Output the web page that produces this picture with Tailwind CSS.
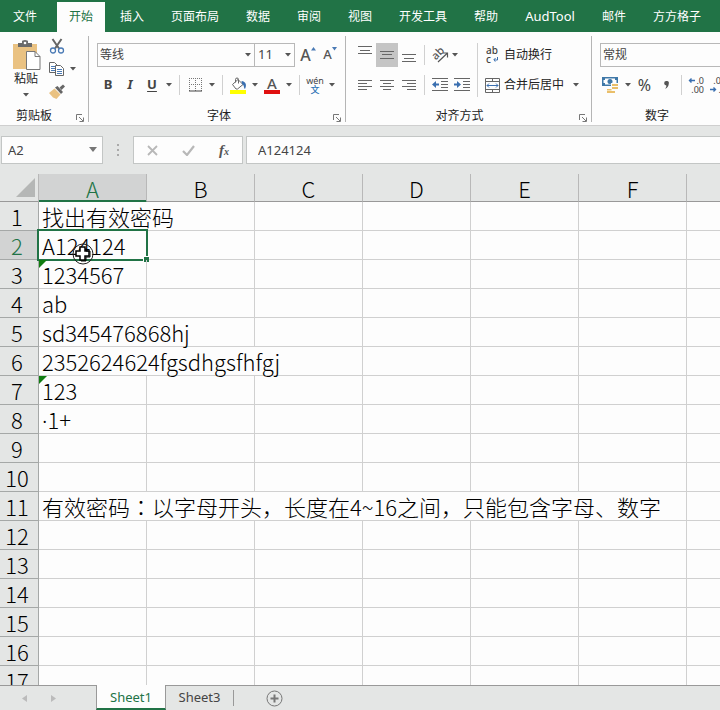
<!DOCTYPE html>
<html lang="zh-CN">
<head>
    <meta charset="UTF-8">
    <meta name="viewport" content="width=device-width, initial-scale=1.0">
    <title>Excel</title>
    <script src="https://cdn.jsdelivr.net/npm/@tailwindcss/browser@4"></script>
</head>
<body class="h-screen flex flex-col overflow-hidden bg-[#e4e6e5] text-[#333] text-xs font-['Noto_Sans','Noto_Sans_CJK_SC',sans-serif]">

    <!-- Shared icons -->
    <svg class="hidden">
        <symbol id="caret" viewBox="0 0 6 4"><path d="M0 0h6L3 3.5z" fill="#555"/></symbol>
        <symbol id="launcher" viewBox="0 0 8 8"><path d="M.5 6V.5H6M3 3l4 4M7.5 3.500V7.500H3.500" fill="none" stroke="#777"/></symbol>
    </svg>

    <!-- Ribbon tabs -->
    <nav class="flex-none h-8 pt-0.5 flex gap-[3px] bg-[#217346] text-white whitespace-nowrap overflow-hidden">
        <button class="w-[54px] flex-none pl-[13px] text-left">文件</button>
        <button class="px-3 bg-[#fdfdfd] text-[#217346]">开始</button>
        <button class="px-3">插入</button>
        <button class="px-3">页面布局</button>
        <button class="px-3">数据</button>
        <button class="px-3">审阅</button>
        <button class="px-3">视图</button>
        <button class="px-3">开发工具</button>
        <button class="px-3">帮助</button>
        <button class="px-3 text-[13px]">AudTool</button>
        <button class="px-3">邮件</button>
        <button class="px-3">方方格子</button>
    </nav>

    <!-- Ribbon -->
    <div class="flex-none flex pt-1 pb-[3px] bg-[#fdfdfd] border-b border-[#cfcfcf] overflow-hidden whitespace-nowrap text-[#222]">

        <!-- Clipboard -->
        <section class="flex-none w-[89px] h-[86px] border-r border-[#b5b5b5] flex flex-col justify-between">
            <div class="flex pl-2 pt-0.5">
                <button class="w-9 flex flex-col items-center pt-0.5" aria-label="粘贴">
                    <svg class="w-[29px] h-[31px]" viewBox="0 0 29 31">
                        <path d="M1 4h24v25H1z" fill="#eac282"/>
                        <path d="M6 3h4V1.500a3 1.500 0 0 1 6 0V3h4v4H6z" fill="#6b6b6b"/>
                        <circle cx="13" cy="3" r="1.300" fill="#fff"/>
                        <path d="M14.500 11.500h8.500l5 5v13H14.500z" fill="#fff" stroke="#777"/>
                        <path d="M23 11.500v5h5" fill="none" stroke="#777"/>
                    </svg>
                    <span class="leading-4">粘贴</span>
                    <svg class="w-1.5 h-1 mt-1.5"><use href="#caret"/></svg>
                </button>
                <div class="flex flex-col gap-[7px] pl-1">
                    <button class="w-[18px] h-4 flex justify-center" aria-label="剪切">
                        <svg class="w-4 h-4" viewBox="0 0 16 16" fill="none">
                            <path d="M3.500 1l6.500 9.500M12.500 1L6 10.500" stroke="#666" stroke-width="2"/>
                            <circle cx="4" cy="12.500" r="2.500" stroke="#4a7ab5" stroke-width="1.300"/>
                            <circle cx="12" cy="12.500" r="2.500" stroke="#4a7ab5" stroke-width="1.300"/>
                        </svg>
                    </button>
                    <button class="h-4 flex items-center gap-1" aria-label="复制">
                        <svg class="w-[18px] h-4" viewBox="0 0 18 16" stroke="#666">
                            <path d="M1.500 1.500h5l3 3v7h-8z" fill="#fff"/>
                            <path d="M3 5.500h4M3 7.500h4M3 9.500h4" stroke="#4a7ab5"/>
                            <path d="M7.500 4.500h5l3 3v7h-8z" fill="#fff"/>
                            <path d="M9 8.500h5M9 10.500h5M9 12.500h5" stroke="#4a7ab5"/>
                        </svg>
                        <svg class="w-1.5 h-1"><use href="#caret"/></svg>
                    </button>
                    <button class="w-[18px] h-4 flex justify-center" aria-label="格式刷">
                        <svg class="w-4 h-4" viewBox="0 0 16 16">
                            <path d="M6 3.500l2.500-1.500 5.500 6-2 2z" fill="#666"/>
                            <path d="M10.500 3.500L14 .5l2 2-3.500 3.500z" fill="#666"/>
                            <path d="M5.500 4.500l6 6L7.500 15 4 13.500 0 9z" fill="#eac282"/>
                        </svg>
                    </button>
                </div>
            </div>
            <div class="flex items-center justify-between pl-4 pr-1 leading-3"><span>剪贴板</span><svg class="w-2 h-2 mt-1"><use href="#launcher"/></svg></div>
        </section>

        <!-- Font -->
        <section class="flex-none w-[257px] h-[86px] pt-[7px] border-r border-[#b5b5b5] flex flex-col justify-between">
            <div class="pl-2 flex flex-col gap-1.5">
                <div class="flex h-6 items-center">
                    <div class="relative w-[158px]">
                        <select aria-label="字体" class="appearance-none w-full h-6 pl-0.5 border border-[#b8b8b8] text-[#444]"><option>等线</option></select>
                        <svg class="absolute right-1 top-2.5 w-1.5 h-1"><use href="#caret"/></svg>
                    </div>
                    <div class="relative w-[41px] -ml-px">
                        <select aria-label="字号" class="appearance-none w-full h-6 pl-[3px] border border-[#b8b8b8] text-[#444] text-[13px]"><option>11</option></select>
                        <svg class="absolute right-1 top-2.5 w-1.5 h-1"><use href="#caret"/></svg>
                    </div>
                    <button class="w-[22px] h-6 ml-0.5 flex items-center justify-center text-base font-medium text-[#555]" aria-label="增大字号">A<svg class="w-[5px] h-1 -mt-3" viewBox="0 0 5 4"><path d="M0 3.500h5L2.500 0z" fill="#4a7ab5"/></svg></button>
                    <button class="w-[22px] h-6 flex items-center justify-center text-[13px] font-medium text-[#555]" aria-label="减小字号">A<svg class="w-[5px] h-1 -mt-3" viewBox="0 0 5 4"><path d="M0 0h5L2.500 3.500z" fill="#4a7ab5"/></svg></button>
                </div>
                <div class="flex h-6 items-center text-[13px] text-[#444]">
                    <button class="w-[22px] font-bold">B</button>
                    <button class="w-[22px] font-bold italic">I</button>
                    <button class="w-[22px] font-bold underline underline-offset-2">U</button>
                    <button class="w-3 h-6 flex items-center justify-center" aria-label="下划线选项"><svg class="w-1.5 h-1"><use href="#caret"/></svg></button>
                    <span class="w-px h-5 mx-1 bg-[#d0d0d0]"></span>
                    <button class="w-[22px] h-6 flex items-center justify-center" aria-label="边框">
                        <svg class="w-[13px] h-[14px]" viewBox="0 0 13 14" fill="none" stroke="#777">
                            <path d="M0 .5h13M0 6.500h13M.5 0v13M6.500 0v13M12.500 0v13" stroke-dasharray="1 1"/>
                            <path d="M0 13h13" stroke="#444"/>
                        </svg>
                    </button>
                    <button class="w-3 h-6 flex items-center justify-center" aria-label="边框选项"><svg class="w-1.5 h-1"><use href="#caret"/></svg></button>
                    <span class="w-px h-5 mx-1 bg-[#d0d0d0]"></span>
                    <button class="w-[22px] h-6 flex items-center justify-center" aria-label="填充颜色">
                        <svg class="w-[17px] h-[17px]" viewBox="0 0 17 17">
                            <path d="M2.500 7.500L8 2.500l5 5-5.500 4.500H6z" fill="#fff" stroke="#666"/>
                            <path d="M5.500 5.500V2.500a1.500 1.500 0 0 1 3 0v4" fill="none" stroke="#666"/>
                            <path d="M11.500 4c4.500.5 5.500 4 3.500 8-1.500-1-.5-4-3-5z" fill="#3a6fb0"/>
                            <path d="M0 13h16v4H0z" fill="#ffff00"/>
                        </svg>
                    </button>
                    <button class="w-3 h-6 flex items-center justify-center" aria-label="填充选项"><svg class="w-1.5 h-1"><use href="#caret"/></svg></button>
                    <button class="w-[22px] h-6 flex flex-col items-center justify-center text-[15px] font-medium leading-[13px] text-[#555]" aria-label="字体颜色">A<span class="w-4 h-1 bg-[#e01010]"></span></button>
                    <button class="w-3 h-6 flex items-center justify-center" aria-label="颜色选项"><svg class="w-1.5 h-1"><use href="#caret"/></svg></button>
                    <span class="w-px h-5 mx-1 bg-[#d0d0d0]"></span>
                    <button class="w-[22px] h-6 flex flex-col items-center justify-center text-[9px] leading-[9px] text-[#444]"><span>wén</span><span class="font-medium text-[#2f74b5]">文</span></button>
                    <button class="w-3 h-6 flex items-center justify-center" aria-label="拼音选项"><svg class="w-1.5 h-1"><use href="#caret"/></svg></button>
                </div>
            </div>
            <div class="flex items-center pl-4 pr-1 leading-3"><span class="flex-1 text-center">字体</span><svg class="w-2 h-2 mt-1"><use href="#launcher"/></svg></div>
        </section>

        <!-- Alignment -->
        <section class="flex-none w-[246px] h-[86px] pt-[7px] border-r border-[#b5b5b5] flex flex-col justify-between">
            <div class="pl-2 flex">
                <div class="flex flex-col gap-1.5">
                    <div class="flex h-6 items-center">
                        <button class="w-[22px] h-6 flex justify-center pt-[3px]" aria-label="顶端对齐"><svg class="w-[14px] h-[10px]" viewBox="0 0 14 10"><path d="M0 .5h14M2 4.500h10M0 7.500h14" stroke="#666"/></svg></button>
                        <button class="w-[22px] h-6 flex items-center justify-center bg-[#c5c5c5]" aria-label="垂直居中"><svg class="w-[14px] h-[10px]" viewBox="0 0 14 10"><path d="M0 1.500h14M2 4.500h10M0 8.500h14" stroke="#666"/></svg></button>
                        <button class="w-[22px] h-6 flex items-end justify-center pb-1" aria-label="底端对齐"><svg class="w-[14px] h-[10px]" viewBox="0 0 14 10"><path d="M0 1.500h14M2 5.500h10M0 8.500h14" stroke="#666"/></svg></button>
                        <span class="w-px h-5 mx-1 bg-[#d0d0d0]"></span>
                        <button class="relative w-[22px] h-6 text-[#555]" aria-label="方向">
                            <span class="absolute left-0.5 top-1 text-[11px] leading-3 font-medium -rotate-45">ab</span>
                            <svg class="absolute left-2 top-2 w-3 h-3" viewBox="0 0 12 12"><path d="M1 11L10.500 2M6 2h4.500v4.500" fill="none" stroke="#555" stroke-width="1.200"/></svg>
                        </button>
                        <button class="w-2 h-6 flex items-center justify-center" aria-label="方向选项"><svg class="w-1.5 h-1"><use href="#caret"/></svg></button>
                    </div>
                    <div class="flex h-6 items-center">
                        <button class="w-[22px] h-6 flex items-center justify-center" aria-label="左对齐"><svg class="w-[14px] h-[10px]" viewBox="0 0 14 10"><path d="M0 .5h14M0 3.500h9M0 6.500h14M0 9.500h9" stroke="#666"/></svg></button>
                        <button class="w-[22px] h-6 flex items-center justify-center" aria-label="居中"><svg class="w-[14px] h-[10px]" viewBox="0 0 14 10"><path d="M0 .5h14M3 3.500h8M0 6.500h14M3 9.500h8" stroke="#666"/></svg></button>
                        <button class="w-[22px] h-6 flex items-center justify-center" aria-label="右对齐"><svg class="w-[14px] h-[10px]" viewBox="0 0 14 10"><path d="M0 .5h14M5 3.500h9M0 6.500h14M5 9.500h9" stroke="#666"/></svg></button>
                        <span class="w-px h-5 mx-1 bg-[#d0d0d0]"></span>
                        <button class="w-[22px] h-6 flex items-center justify-center" aria-label="减少缩进">
                            <svg class="w-4 h-[14px]" viewBox="0 0 16 14"><path d="M0 .5h16M9 3.500h7M9 6.500h7M9 9.500h7M0 12.500h16" stroke="#666"/><path d="M0 6.500l4-3.500v2.500h3v2H4V10z" fill="#3a6fb0"/></svg>
                        </button>
                        <button class="w-[22px] h-6 flex items-center justify-center" aria-label="增加缩进">
                            <svg class="w-4 h-[14px]" viewBox="0 0 16 14"><path d="M0 .5h16M9 3.500h7M9 6.500h7M9 9.500h7M0 12.500h16" stroke="#666"/><path d="M7 6.500L3 3v2.500H0v2h3V10z" fill="#3a6fb0"/></svg>
                        </button>
                    </div>
                </div>
                <span class="w-px mx-1 bg-[#d0d0d0]"></span>
                <div class="flex flex-col gap-1.5">
                    <button class="flex h-6 items-center">
                        <span class="w-[22px] pl-1 flex flex-col text-left text-[10px] leading-[9px] font-medium text-[#444]">
                            <span>ab</span>
                            <span class="flex items-center">c<svg class="w-[5px] h-[5px] ml-0.5" viewBox="0 0 5 5"><path d="M4.500 0v3H1M2.500 1L.8 3l1.700 1.700" fill="none" stroke="#3a6fb0"/></svg></span>
                        </span>
                        自动换行
                    </button>
                    <div class="flex h-6 items-center">
                        <button class="flex items-center">
                            <svg class="w-[22px] h-[15px]" viewBox="0 0 22 15" fill="none" stroke="#666">
                                <path d="M3.500.5h14v14h-14zM3.500 3.500h14M3.500 11.500h14M10.500.5v3M10.500 11.500v3"/>
                                <path d="M5 7.500h11M7 5.500l-2 2 2 2M14 5.500l2 2-2 2" stroke="#3a6fb0"/>
                            </svg>
                            合并后居中
                        </button>
                        <button class="w-3 h-6 ml-1.5 flex items-center justify-center" aria-label="合并选项"><svg class="w-1.5 h-1"><use href="#caret"/></svg></button>
                    </div>
                </div>
            </div>
            <div class="flex items-center pr-1 leading-3"><span class="flex-1 pr-1.5 text-center">对齐方式</span><svg class="w-2 h-2 mt-1"><use href="#launcher"/></svg></div>
        </section>

        <!-- Number -->
        <section class="flex-none w-[146px] h-[86px] pt-[7px] flex flex-col justify-between">
            <div class="px-2 flex flex-col gap-1.5">
                <select aria-label="数字格式" class="appearance-none w-full h-6 pl-0.5 border border-[#b8b8b8] text-[#444]"><option>常规</option></select>
                <div class="flex h-6 items-center text-[#444]">
                    <button class="w-[22px] h-6 flex items-center justify-center" aria-label="会计格式">
                        <svg class="w-[17px] h-4" viewBox="0 0 17 16">
                            <path d="M0 0h16v9H0z" fill="#3f78a8"/>
                            <path d="M3 1.500h10v1.500h1.500v3H13v1.500H3V6H1.500V3H3z" fill="#fff"/>
                            <circle cx="8" cy="4.500" r="2.500" fill="#3f78a8"/>
                            <path d="M9 6h8v10H4v-5h5z" fill="#fdfdfd"/>
                            <path d="M10 7h6v2h-6zM10 10h6v2h-6zM5 12h4.500v1.500H5zM5 14h8v2H5z" fill="#eabf6a"/>
                        </svg>
                    </button>
                    <button class="w-3 h-6 flex items-center justify-center" aria-label="货币选项"><svg class="w-1.5 h-1"><use href="#caret"/></svg></button>
                    <button class="w-[22px] text-base">%</button>
                    <button class="w-[22px] h-6 flex items-center justify-center" aria-label="千位分隔"><svg class="w-[5px] h-2" viewBox="0 0 5 8"><path d="M2.500 0A2 2 0 0 1 4.800 2.500C4.700 5 3.500 7 1 8c1-1.500 1.500-2.500 1.300-3.500A2.200 2.200 0 0 1 2.500 0z" fill="#555"/></svg></button>
                    <span class="w-px h-5 mx-1 bg-[#d0d0d0]"></span>
                    <button class="w-[22px] h-6 flex-none flex flex-col justify-center text-right text-[9px] leading-[9px] pr-1" aria-label="增加小数位数">
                        <span class="flex items-center justify-end gap-px"><svg class="w-[7px] h-[5px]" viewBox="0 0 7 5"><path d="M7 2.500H1.500M3.500.5l-2 2 2 2" fill="none" stroke="#3a6fb0" stroke-width="1.400"/></svg>.0</span>
                        <span>.00</span>
                    </button>
                    <button class="w-[22px] h-6 flex-none flex flex-col justify-center text-right text-[9px] leading-[9px] pr-1" aria-label="减少小数位数">
                        <span>.00</span>
                        <span class="flex items-center justify-end gap-px"><svg class="w-[7px] h-[5px]" viewBox="0 0 7 5"><path d="M0 2.500h5.500M3.500.5l2 2-2 2" fill="none" stroke="#3a6fb0" stroke-width="1.400"/></svg>.0</span>
                    </button>
                </div>
            </div>
            <div class="w-[130px] text-center leading-3">数字</div>
        </section>
    </div>

    <!-- Formula bar -->
    <div class="flex-none flex py-2.5 pl-px">
        <div class="relative w-[102px]">
            <input aria-label="名称框" value="A2" class="w-full h-7 pl-1.5 bg-[#fdfdfd] border border-[#c3c6c5] text-[13px] text-[#444]">
            <svg class="absolute right-1.5 top-[11px] w-2 h-[5px]" viewBox="0 0 8 5"><path d="M0 0h8L4 5z" fill="#777"/></svg>
        </div>
        <div class="w-[30px] flex flex-col items-center justify-center gap-[3px]">
            <span class="size-0.5 bg-[#aaa]"></span>
            <span class="size-0.5 bg-[#aaa]"></span>
            <span class="size-0.5 bg-[#aaa]"></span>
        </div>
        <div class="w-[110px] h-7 flex bg-[#fdfdfd] border border-[#c3c6c5]">
            <button class="w-9 flex items-center justify-center" aria-label="取消"><svg class="w-[11px] h-[11px]" viewBox="0 0 11 11"><path d="M1 1l9 9M10 1l-9 9" stroke="#b8b8b8" stroke-width="1.800"/></svg></button>
            <button class="w-9 flex items-center justify-center" aria-label="输入"><svg class="w-[13px] h-[11px]" viewBox="0 0 13 11"><path d="M1 6l4 4 7-9" fill="none" stroke="#b8b8b8" stroke-width="2.200"/></svg></button>
            <button class="w-9 font-bold italic text-[15px] text-[#555] leading-none font-['Liberation_Serif',serif]">f<span class="text-[10px]">x</span></button>
        </div>
        <input aria-label="编辑栏" value="A124124" class="flex-1 min-w-0 h-7 ml-[3px] pl-[11px] bg-[#fdfdfd] border border-r-0 border-[#c3c6c5] text-[13px] text-[#444]">
    </div>

    <!-- Grid -->
    <main class="flex-1 min-h-0 overflow-hidden">
        <table class="w-full table-fixed border-separate border-spacing-0 bg-[#fdfdfd] text-[22px] leading-7 font-light text-black whitespace-nowrap font-['Noto_Sans_CJK_SC',sans-serif]
            [&_th]:font-light [&_th]:p-0 [&_td]:py-0 [&_td]:pl-[3px] [&_td]:pr-0 [&_td]:h-[29px] [&_td]:border-r [&_td]:border-b [&_td]:border-[#d0d0d0]
            [&_tbody_th]:pr-1 [&_tbody_th]:border-r [&_tbody_th]:border-b [&_tbody_th]:border-[#a5a8a7] [&_thead_th]:border-b [&_thead_th]:border-r [&_thead_th]:border-r-[#b8b8b8]">
            <colgroup>
                <col class="w-[39px]"><col class="w-[108px]"><col class="w-[108px]"><col class="w-[108px]"><col class="w-[108px]"><col class="w-[108px]"><col class="w-[108px]"><col>
            </colgroup>
            <thead class="bg-[#e4e6e5]">
                <tr class="h-7">
                    <th class="border-b-[#999]"><svg class="ml-4 w-5 h-5" viewBox="0 0 20 20" aria-label="全选"><path d="M19 0v19H0z" fill="#b5b7b6"/></svg></th>
                    <th class="border-b-[#217346] bg-[#d2d3d3] text-[#217346] shadow-[inset_0_-1px_0_#217346]"><div class="h-[27px]">A</div></th>
                    <th class="border-b-[#999]"><div class="h-[27px]">B</div></th>
                    <th class="border-b-[#999]"><div class="h-[27px]">C</div></th>
                    <th class="border-b-[#999]"><div class="h-[27px]">D</div></th>
                    <th class="border-b-[#999]"><div class="h-[27px]">E</div></th>
                    <th class="border-b-[#999]"><div class="h-[27px]">F</div></th>
                    <th class="border-b-[#999] border-r-0!"></th>
                </tr>
            </thead>
            <tbody>
                <tr><th class="bg-[#e4e6e5]">1</th><td colspan="2">找出有效密码</td><td></td><td></td><td></td><td></td><td class="border-r-0!"></td></tr>
                <tr>
                    <th class="bg-[#d2d3d3] text-[#217346]">2</th>
                    <td class="relative">A124124
                        <div class="absolute -inset-0.5 border-2 border-[#217346]"></div>
                        <div class="absolute -right-[3px] -bottom-[3px] size-1.5 border-t border-l border-white bg-[#217346]"></div>
                        <!-- Mouse pointer -->
                        <svg class="absolute left-[33px] top-3 w-[22px] h-[22px]" viewBox="0 0 22 22">
                            <circle cx="11" cy="11" r="10" fill="none" stroke="#222"/>
                            <path d="M8 4h5v4h4v5h-4v4H8v-4H4V8h4z" fill="#fff" stroke="#000" stroke-width="1.500"/>
                            <path d="M14 5v3h4v6h-4v4H9" fill="none" stroke="#000"/>
                        </svg>
                    </td>
                    <td></td><td></td><td></td><td></td><td></td><td class="border-r-0!"></td>
                </tr>
                <tr><th class="bg-[#e4e6e5]">3</th><td class="relative">1234567<svg class="absolute left-0 top-0 size-2" viewBox="0 0 8 8"><path d="M0 0h8L0 8z" fill="#107c10"/></svg></td><td></td><td></td><td></td><td></td><td></td><td class="border-r-0!"></td></tr>
                <tr><th class="bg-[#e4e6e5]">4</th><td>ab</td><td></td><td></td><td></td><td></td><td></td><td class="border-r-0!"></td></tr>
                <tr><th class="bg-[#e4e6e5]">5</th><td colspan="2">sd345476868hj</td><td></td><td></td><td></td><td></td><td class="border-r-0!"></td></tr>
                <tr><th class="bg-[#e4e6e5]">6</th><td colspan="3">2352624624fgsdhgsfhfgj</td><td></td><td></td><td></td><td class="border-r-0!"></td></tr>
                <tr><th class="bg-[#e4e6e5]">7</th><td class="relative">123<svg class="absolute left-0 top-0 size-2" viewBox="0 0 8 8"><path d="M0 0h8L0 8z" fill="#107c10"/></svg></td><td></td><td></td><td></td><td></td><td></td><td class="border-r-0!"></td></tr>
                <tr><th class="bg-[#e4e6e5]">8</th><td><span class="leading-5 font-['Noto_Sans']">·</span>1+</td><td></td><td></td><td></td><td></td><td></td><td class="border-r-0!"></td></tr>
                <tr><th class="bg-[#e4e6e5]">9</th><td></td><td></td><td></td><td></td><td></td><td></td><td class="border-r-0!"></td></tr>
                <tr><th class="bg-[#e4e6e5]">10</th><td></td><td></td><td></td><td></td><td></td><td></td><td class="border-r-0!"></td></tr>
                <tr><th class="bg-[#e4e6e5]">11</th><td colspan="6">有效密码<span lang="zh-TW" class="font-['Noto_Sans_CJK_TC']">：</span>以字母开头，长度在4~16之间，只能包含字母、数字</td><td class="border-r-0!"></td></tr>
                <tr><th class="bg-[#e4e6e5]">12</th><td></td><td></td><td></td><td></td><td></td><td></td><td class="border-r-0!"></td></tr>
                <tr><th class="bg-[#e4e6e5]">13</th><td></td><td></td><td></td><td></td><td></td><td></td><td class="border-r-0!"></td></tr>
                <tr><th class="bg-[#e4e6e5]">14</th><td></td><td></td><td></td><td></td><td></td><td></td><td class="border-r-0!"></td></tr>
                <tr><th class="bg-[#e4e6e5]">15</th><td></td><td></td><td></td><td></td><td></td><td></td><td class="border-r-0!"></td></tr>
                <tr><th class="bg-[#e4e6e5]">16</th><td></td><td></td><td></td><td></td><td></td><td></td><td class="border-r-0!"></td></tr>
                <tr><th class="bg-[#e4e6e5]">17</th><td></td><td></td><td></td><td></td><td></td><td></td><td class="border-r-0!"></td></tr>
            </tbody>
        </table>
    </main>

    <!-- Sheet tabs -->
    <footer class="flex-none h-[25px] flex items-stretch border-t border-[#999] text-[13px] text-[#444]">
        <div class="w-24 flex items-center pl-[22px] gap-6">
            <button aria-label="上一个"><svg class="w-[5px] h-[7px]" viewBox="0 0 5 7"><path d="M5 0v7L0 3.500z" fill="#bbb"/></svg></button>
            <button aria-label="下一个"><svg class="w-[5px] h-[7px]" viewBox="0 0 5 7"><path d="M0 0v7l5-3.500z" fill="#bbb"/></svg></button>
        </div>
        <button class="w-[70px] -mt-px pt-0.5 bg-[#fdfdfd] text-[#217346] border-x border-x-[#999] border-b-2 border-b-[#217346]">Sheet1</button>
        <button class="w-[67px]">Sheet3</button>
        <span class="w-px my-1 bg-[#999]"></span>
        <button class="ml-8 flex items-center" aria-label="新工作表">
            <svg class="w-[17px] h-[17px]" viewBox="0 0 17 17" fill="none" stroke="#777"><circle cx="8.500" cy="8.500" r="7.500"/><path d="M8.500 4.500v8M4.500 8.500h8" stroke-width="2"/></svg>
        </button>
    </footer>

</body>
</html>
